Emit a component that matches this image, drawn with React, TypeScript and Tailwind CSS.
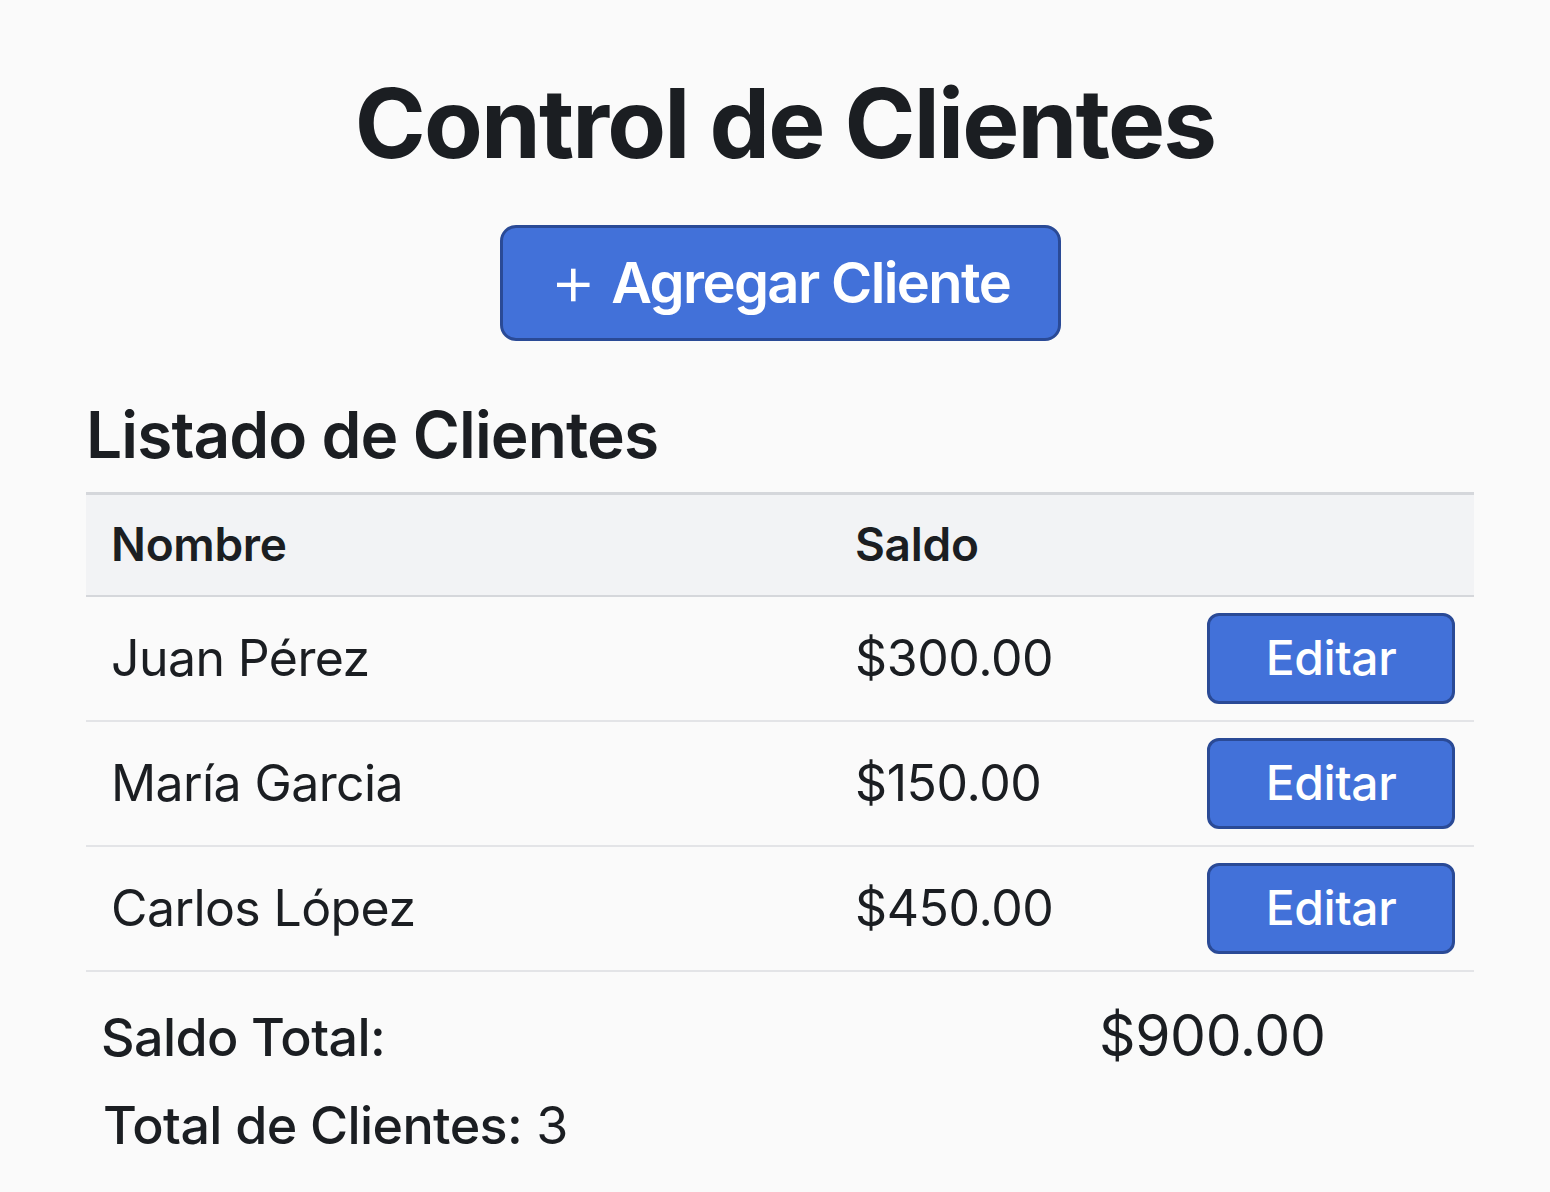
import React from "react";

const clients = [
  { name: "Juan Pérez", balance: 300 },
  { name: "María Garcia", balance: 150 },
  { name: "Carlos López", balance: 450 },
];

const money = (n: number) => `$${n.toFixed(2)}`;

export default function App() {
  const total = clients.reduce((s, c) => s + c.balance, 0);

  return (
    <div className="min-h-[1192px] w-full bg-[#fafafa] text-[#1b1e22] font-['Inter','Noto_Sans',sans-serif]">
      <div className="pl-[86px] pr-[76px] pt-[75px]">
        <h1 className="text-center text-[96px] leading-none font-bold tracking-[-1.8px] pl-[10px]">
          Control de Clientes
        </h1>

        <div className="flex justify-center mt-[54px]">
          <button className="w-[561px] h-[116px] rounded-[16px] border-[3px] border-[#2a4a96] bg-[#4271d9] text-white text-[56px] font-semibold tracking-[-1.6px] flex items-center justify-center gap-[16px]">
            <span className="font-light text-[72px] leading-none -mt-[8px]">+</span>
            <span>Agregar Cliente</span>
          </button>
        </div>

        <h2 className="mt-[62px] text-[64px] leading-none font-semibold tracking-[-0.9px]">
          Listado de Clientes
        </h2>

        <table className="mt-[25px] w-full border-collapse">
          <thead>
            <tr className="bg-[#f2f3f5] border-t-[3px] border-b-[2px] border-[#d5d7db]">
              <th className="h-[102px] w-[744px] pl-[25px] text-left text-[46px] font-semibold tracking-[-0.3px]">Nombre</th>
              <th className="pl-[25px] text-left text-[46px] font-semibold tracking-[-0.3px]">Saldo</th>
              <th></th>
            </tr>
          </thead>
          <tbody>
            {clients.map((c) => (
              <tr key={c.name} className="border-b-[2px] border-[#e3e4e7]">
                <td className="h-[125px] pl-[25px] text-[50px] tracking-[-0.6px]">{c.name}</td>
                <td className="pl-[25px] text-[50px] tracking-[-0.4px]">{money(c.balance)}</td>
                <td className="pr-[19px] text-right">
                  <button className="w-[248px] h-[91px] rounded-[12px] border-[3px] border-[#2a4a96] bg-[#4271d9] text-white text-[48px] font-medium tracking-[-0.4px]">
                    Editar
                  </button>
                </td>
              </tr>
            ))}
          </tbody>
        </table>

        <div className="mt-[35px] pl-[15px] flex items-baseline leading-none">
          <span className="w-[998px] text-[52px] font-medium tracking-[-0.6px]">Saldo Total:</span>
          <span className="text-[57px] tracking-[-0.4px]">{money(total)}</span>
        </div>
        <div className="mt-[36px] pl-[17px] text-[52px] leading-none tracking-[-0.6px]">
          <span className="font-medium">Total de Clientes:</span> {clients.length}
        </div>
      </div>
    </div>
  );
}
